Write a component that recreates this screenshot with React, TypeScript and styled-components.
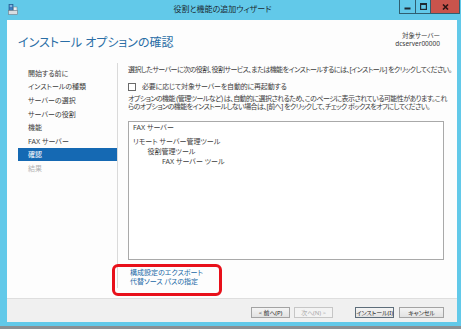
import React from "react";
import styled, { createGlobalStyle } from "styled-components";

const Global = createGlobalStyle`
  html, body { margin: 0; padding: 0; background: #ffffff; }
  body {
    font-family: "Noto Sans", "Noto Sans CJK JP", sans-serif;
    font-feature-settings: "palt";
    -webkit-font-smoothing: antialiased;
  }
`;

const Root = styled.div`
  position: relative;
  width: 465px;
  height: 332px;
  overflow: hidden;
  background: #ffffff;
`;

const Window = styled.div`
  width: 461px;
  height: 326px;
  box-sizing: border-box;
  background: #62c9e9;
  padding: 0 4px 4px 7px;
  display: flex;
  flex-direction: column;
  box-shadow: 0 3px 0 #8a8f93;
`;

const TitleBar = styled.div`
  height: 20px;
  display: flex;
  align-items: flex-start;
  position: relative;
  margin-left: -7px;
  margin-right: -4px;
`;

const AppIcon = styled.svg`
  margin: 4px 0 0 8px;
  width: 10px;
  height: 11px;
`;

const TitleText = styled.div`
  position: absolute;
  left: 0;
  right: 16px;
  top: 4px;
  text-align: center;
  font-size: 8px;
  line-height: 10px;
  color: #1b2a33;
  pointer-events: none;
`;

const Controls = styled.div`
  margin-left: auto;
  margin-right: 1px;
  display: flex;
  height: 14px;
`;

const CtrlButton = styled.div<{ $w: number; $close?: boolean }>`
  width: ${(p) => p.$w}px;
  height: 14px;
  box-sizing: border-box;
  border: 1px solid #2f5f70;
  border-top: none;
  margin-left: -1px;
  background: ${(p) => (p.$close ? "#c9544c" : "#62c9e9")};
  display: flex;
  align-items: center;
  justify-content: center;
`;

const Content = styled.div`
  flex: 1;
  display: flex;
  flex-direction: column;
  background: #fdfdfd;
  min-height: 0;
`;

const Header = styled.div`
  height: 37px;
  display: flex;
  align-items: flex-start;
  justify-content: space-between;
  padding: 0 17px 0 11px;
`;

const PageTitle = styled.h1`
  margin: 15px 0 0;
  font-size: 12px;
  line-height: 16px;
  font-weight: 400;
  color: #2a6ea6;
`;

const Target = styled.div`
  margin-top: 12px;
  text-align: right;
  font-size: 6.5px;
  line-height: 8px;
  color: #3a3a3a;
`;

const Body = styled.div`
  flex: 1;
  display: flex;
  padding: 6px 0 10px;
  min-height: 0;
`;

const Nav = styled.div`
  width: 111px;
  flex-shrink: 0;
  box-sizing: border-box;
  border-right: 1px solid #dadada;
  padding: 3px 0 0 11px;
  display: flex;
  flex-direction: column;
`;

const NavItem = styled.div<{ $active?: boolean; $disabled?: boolean }>`
  height: 13.6px;
  display: flex;
  align-items: center;
  padding-left: 10px;
  font-size: 7px;
  color: ${(p) => (p.$active ? "#ffffff" : p.$disabled ? "#b5b5b5" : "#3c3c3c")};
  background: ${(p) => (p.$active ? "#1569b3" : "transparent")};
`;

const Main = styled.div`
  flex: 1;
  min-width: 0;
  padding: 3px 13px 0 10px;
  display: flex;
  flex-direction: column;
  font-size: 7px;
  color: #3c3c3c;
`;

const Line = styled.div`
  line-height: 8px;
  white-space: nowrap;
  letter-spacing: -0.57px;
`;

const CheckRow = styled.label`
  margin-top: 9px;
  display: flex;
  align-items: center;
  gap: 6px;
  line-height: 8px;
  letter-spacing: -0.2px;
`;

const Check = styled.span`
  width: 8px;
  height: 8px;
  box-sizing: border-box;
  border: 1px solid #6a6a6a;
  background: #fff;
`;

const Para = styled.div`
  margin-top: 4px;
  line-height: 8px;
`;

const ResultBox = styled.div`
  margin-top: 10px;
  height: 139px;
  box-sizing: border-box;
  border: 1px solid #a9a9a9;
  background: #fff;
  padding: 1px 0 0 4px;
`;

const TreeItem = styled.div<{ $level: number; $gap?: boolean }>`
  padding-left: ${(p) => p.$level * 14.5}px;
  line-height: 10px;
  margin-bottom: ${(p) => (p.$gap ? 4 : 0)}px;
`;

const Links = styled.div`
  margin-top: 8px;
  padding-left: 2px;
  display: flex;
  flex-direction: column;
`;

const LinkText = styled.a`
  line-height: 9px;
  color: #2168a6;
  text-decoration: none;
`;

const Footer = styled.div`
  height: 24px;
  box-sizing: border-box;
  border-top: 1px solid #dedede;
  background: #f0f0f0;
  display: flex;
  align-items: flex-start;
  justify-content: flex-end;
  padding: 8px 13px 0 0;
`;

const Btn = styled.div<{ $w: number; $disabled?: boolean; $default?: boolean; $gap: number }>`
  width: ${(p) => p.$w}px;
  height: 11px;
  box-sizing: border-box;
  margin-left: ${(p) => p.$gap}px;
  border: 1px solid ${(p) => (p.$default ? "#5d6d7a" : p.$disabled ? "#c6c6c6" : "#a3a3a3")};
  background: ${(p) => (p.$disabled ? "#f3f3f3" : "linear-gradient(#f4f4f4, #e2e2e2)")};
  color: ${(p) => (p.$disabled ? "#a8a8a8" : "#2a2a2a")};
  font-size: 6px;
  letter-spacing: -0.1px;
  display: flex;
  align-items: center;
  justify-content: center;
  white-space: nowrap;
  overflow: visible;
`;

const Highlight = styled.div`
  position: absolute;
  left: 112px;
  top: 264px;
  width: 110px;
  height: 32px;
  box-sizing: border-box;
  border: 3px solid #e8101a;
  border-radius: 6px;
`;

export default function App() {
  const nav = [
    { t: "開始する前に" },
    { t: "インストールの種類" },
    { t: "サーバーの選択" },
    { t: "サーバーの役割" },
    { t: "機能" },
    { t: "FAX サーバー" },
    { t: "確認", active: true },
    { t: "結果", disabled: true },
  ];
  return (
    <Root>
      <Global />
      <Window>
        <TitleBar>
          <AppIcon viewBox="0 0 10 11">
            <rect x="1" y="0.5" width="4" height="6" fill="#3f7fc0" stroke="#1f4f80" strokeWidth="0.6" />
            <rect x="1.8" y="1.5" width="2.4" height="1" fill="#cfe6fa" />
            <rect x="0.5" y="6.5" width="9" height="4" fill="#d8dde2" stroke="#6f7a84" strokeWidth="0.6" />
            <rect x="5.5" y="3" width="3.5" height="3.5" fill="#e8eef3" stroke="#6f7a84" strokeWidth="0.5" />
          </AppIcon>
          <TitleText>役割と機能の追加ウィザード</TitleText>
          <Controls>
            <CtrlButton $w={17}>
              <svg width="7" height="7" viewBox="0 0 7 7">
                <rect x="0.5" y="4.5" width="6" height="2" fill="#1d2b33" />
              </svg>
            </CtrlButton>
            <CtrlButton $w={16}>
              <svg width="7" height="7" viewBox="0 0 7 7">
                <rect x="0.6" y="0.6" width="5.8" height="5.8" fill="none" stroke="#1d2b33" strokeWidth="1.2" />
                <rect x="0" y="0" width="7" height="2" fill="#1d2b33" />
              </svg>
            </CtrlButton>
            <CtrlButton $w={30} $close>
              <svg width="7" height="6" viewBox="0 0 7 6">
                <path d="M1 0.5 L6 5.5 M6 0.5 L1 5.5" stroke="#2a1414" strokeWidth="1.6" />
              </svg>
            </CtrlButton>
          </Controls>
        </TitleBar>
        <Content>
          <Header>
            <PageTitle>インストール オプションの確認</PageTitle>
            <Target>
              <div>対象サーバー</div>
              <div>dcserver00000</div>
            </Target>
          </Header>
          <Body>
            <Nav>
              {nav.map((n) => (
                <NavItem key={n.t} $active={n.active} $disabled={n.disabled}>
                  {n.t}
                </NavItem>
              ))}
            </Nav>
            <Main>
              <Line>選択したサーバーに次の役割、役割サービス、または機能をインストールするには、[インストール] をクリックしてください。</Line>
              <CheckRow>
                <Check />
                <span>必要に応じて対象サーバーを自動的に再起動する</span>
              </CheckRow>
              <Para>
                <Line>オプションの機能 (管理ツールなど) は、自動的に選択されるため、このページに表示されている可能性があります。これ</Line>
                <Line>らのオプションの機能をインストールしない場合は、[前へ] をクリックして、チェック ボックスをオフにしてください。</Line>
              </Para>
              <ResultBox>
                <TreeItem $level={0} $gap>FAX サーバー</TreeItem>
                <TreeItem $level={0}>リモート サーバー管理ツール</TreeItem>
                <TreeItem $level={1}>役割管理ツール</TreeItem>
                <TreeItem $level={2}>FAX サーバー ツール</TreeItem>
              </ResultBox>
              <Links>
                <LinkText>構成設定のエクスポート</LinkText>
                <LinkText>代替ソース パスの指定</LinkText>
              </Links>
            </Main>
          </Body>
          <Footer>
            <Btn $w={39} $gap={0}>&lt; 前へ(P)</Btn>
            <Btn $w={39} $gap={4} $disabled>次へ(N) &gt;</Btn>
            <Btn $w={39} $gap={22} $default>インストール(I)</Btn>
            <Btn $w={45} $gap={5}>キャンセル</Btn>
          </Footer>
        </Content>
      </Window>
      <Highlight />
    </Root>
  );
}
